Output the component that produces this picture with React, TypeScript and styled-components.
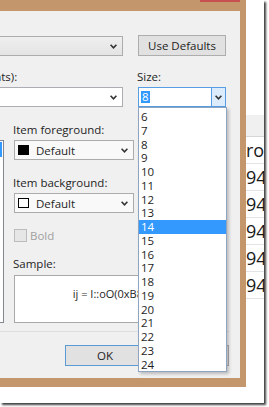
import React, { FC } from 'react';
import styled, { createGlobalStyle } from 'styled-components';

const FRAME = '#c3976b';
const UI_FONT = `'Open Sans', 'Noto Sans', sans-serif`;
// part of the dialog that lies left of the crop
const HIDDEN = 223;

const SIZES = Array.from({ length: 19 }, (_, i) => i + 6);
const DISPLAY_ITEMS = [
  'Plain Text',
  'Selected Text',
  'Inactive Selected Text',
  'Indicator Margin',
  'Line Numbers',
  'Visible White Space',
  'Bookmark',
  'Brace Matching (Highlight)',
  'Brace Matching (Rectangle)',
  'Breakpoint (Disabled)',
  'Breakpoint (Enabled)',
];
const TABLE_ROWS = ['rot', '94', '94', '94', '94', '94'];

const GlobalStyle = createGlobalStyle`
  * { box-sizing: border-box; }
  html, body { margin: 0; padding: 0; background: #fff; }
  body { width: 269px; height: 407px; overflow: hidden; font-family: ${UI_FONT}; }
`;

const Page = styled.div`
  width: 269px;
  height: 407px;
  background: #fff;
`;

const Shot = styled.div`
  display: flex;
  align-items: flex-start;
  width: 264px;
  height: 403px;
  overflow: hidden;
  background: #fff;
  box-shadow: 2px 2px 2px rgba(0, 0, 0, 0.75);
`;

const Window = styled.div`
  flex: none;
  display: flex;
  flex-direction: column;
  width: ${HIDDEN + 252}px;
  margin: -19px 0 0 -${HIDDEN + 6}px;
  padding: 0 6px 9px;
  background: ${FRAME};
`;

const TitleBar = styled.div`
  display: flex;
  justify-content: flex-end;
  height: 30px;
`;

const CloseButton = styled.div`
  width: 40px;
  height: 21px;
  background: #c75050;
`;

const Client = styled.div`
  display: flex;
  flex-direction: column;
  padding: 7px 14px 12px 10px;
  background: #f0f0f0;
  color: #1e1e1e;
  font-size: 11.5px;
`;

const Label = styled.div<{ $gap?: number }>`
  height: 15px;
  margin: ${({ $gap }) => $gap ?? 0}px 0 0 -1px;
  line-height: 15px;
  white-space: nowrap;
`;

const FieldRow = styled.div<{ $gap?: number }>`
  display: flex;
  align-items: flex-end;
  gap: 15px;
  margin-top: ${({ $gap }) => $gap ?? 0}px;
`;

const Field = styled.div<{ $width?: number }>`
  position: relative;
  display: flex;
  flex-direction: column;
  gap: 3px;
  ${({ $width }) => ($width ? `width: ${$width}px; flex: none;` : 'flex: 1;')}
`;

const Combo = styled.div<{ $tone?: 'flat' | 'field' | 'light'; $gap?: number }>`
  display: flex;
  align-items: center;
  flex: none;
  height: 20px;
  margin-top: ${({ $gap }) => $gap ?? 0}px;
  padding: 0 5px 0 3px;
  border: 1px solid ${({ $tone }) => ($tone === 'field' ? '#abadb3' : '#acacac')};
  background: ${({ $tone }) =>
    $tone === 'field' ? '#fff' : $tone === 'light' ? '#f9f9f9' : 'linear-gradient(#efefef, #e4e4e4)'};
  white-space: nowrap;
`;

const ComboValue = styled.div`
  flex: 1;
  display: flex;
  align-items: center;
  gap: 7px;
  overflow: hidden;
`;

const Swatch = styled.span<{ $fill: string }>`
  width: 11px;
  height: 10px;
  border: 1px solid #000;
  background: ${({ $fill }) => $fill};
`;

const SizeBox = styled.div`
  display: flex;
  flex: none;
  height: 20px;
  border: 1px solid #569de5;
  background: #fff;
`;

const SizeText = styled.div`
  flex: 1;
  display: flex;
  align-items: center;
  padding-left: 2px;

  & > span {
    padding: 0 1px;
    line-height: 12px;
    background: #3399ff;
    color: #fff;
  }
`;

const DropButton = styled.div`
  display: flex;
  align-items: center;
  justify-content: center;
  width: 14px;
  border-left: 1px solid #569de5;
  background: #dcecfc;
`;

const DropList = styled.div`
  position: absolute;
  top: 100%;
  left: 0;
  z-index: 2;
  display: flex;
  flex-direction: column;
  width: 89px;
  height: 265px;
  padding-top: 2px;
  border: 1px solid #8ea4c0;
  background: #fff;
  box-shadow: 2px 2px 3px rgba(0, 0, 0, 0.22);
  overflow: hidden;
`;

const DropItem = styled.div<{ $selected?: boolean }>`
  flex: none;
  height: 13.75px;
  padding-left: 2px;
  line-height: 13.75px;
  background: ${({ $selected }) => ($selected ? '#3399ff' : 'transparent')};
  color: ${({ $selected }) => ($selected ? '#fff' : '#1e1e1e')};
`;

const PushButton = styled.button<{ $default?: boolean; $width: number }>`
  flex: none;
  width: ${({ $width }) => $width}px;
  height: 21px;
  padding: 0;
  border: 1px solid ${({ $default }) => ($default ? '#5b9bd5' : '#adadad')};
  background: #e1e1e1;
  color: #1e1e1e;
  font-family: ${UI_FONT};
  font-size: 11.5px;
  line-height: 19px;
`;

const MainSection = styled.div`
  display: flex;
  align-items: stretch;
  margin-top: 15px;
`;

const ListColumn = styled.div`
  flex: 1;
  display: flex;
  flex-direction: column;
  gap: 3px;
  margin-right: 10px;
`;

const ListBox = styled.div`
  flex: 1 1 0;
  min-height: 0;
  padding: 1px;
  border: 1px solid #828790;
  background: #fff;
  overflow: hidden;
`;

const ListItem = styled.div<{ $selected?: boolean }>`
  height: 15px;
  padding-left: 3px;
  line-height: 15px;
  white-space: nowrap;
  background: ${({ $selected }) => ($selected ? '#3399ff' : 'transparent')};
  color: ${({ $selected }) => ($selected ? '#fff' : '#1e1e1e')};
`;

const MidColumn = styled.div`
  flex: none;
  display: flex;
  flex-direction: column;
  width: 120px;
`;

const RightColumn = styled.div`
  flex: none;
  display: flex;
  flex-direction: column;
  width: 88px;
  margin-left: 4px;
  padding-top: 18px;
  gap: 33px;
`;

const CheckRow = styled.div`
  display: flex;
  align-items: center;
  gap: 3px;
  height: 13px;
  margin-top: 16px;
  color: #a0a0a0;
`;

const CheckBox = styled.span`
  width: 13px;
  height: 13px;
  border: 1px solid #bcbcbc;
  background: #e6e6e6;
`;

const SampleBox = styled.div`
  display: flex;
  align-items: center;
  justify-content: center;
  flex: none;
  width: 203px;
  height: 48px;
  margin-top: 4px;
  padding-bottom: 11px;
  border: 1px solid #a9a9a9;
  background: #fff;
  font-size: 11px;
  white-space: nowrap;
`;

const Footer = styled.div`
  display: flex;
  justify-content: flex-end;
  gap: 4px;
  margin: 8px -3px 0 0;
  padding-top: 13px;
  border-top: 1px solid #dedede;
`;

const BackWindow = styled.div`
  flex: 1;
  display: flex;
  flex-direction: column;
  min-width: 0;
  padding-top: 115px;
  background: #fff;
`;

const TableHeader = styled.div`
  height: 22px;
  border-bottom: 1px solid #d6d6d6;
  background: #f0f0f0;
`;

const TableRow = styled.div`
  height: 27px;
  border-bottom: 1px solid #e4e4e4;
  color: #1a1a1a;
  font-size: 18px;
  line-height: 26px;
  white-space: nowrap;
`;

const Chevron: FC = () => (
  <svg width='7' height='5' viewBox='0 0 7 5'>
    <path d='M0.6 0.8 L3.5 3.8 L6.4 0.8' fill='none' stroke='#333' strokeWidth='1.6' />
  </svg>
);

const App: FC = () => (
  <Page>
    <GlobalStyle />
    <Shot>
      <Window>
        <TitleBar>
          <CloseButton />
        </TitleBar>

        <Client>
          <FieldRow>
            <Field>
              <Label>Show settings for:</Label>
              <Combo>
                <ComboValue>Text Editor</ComboValue>
                <Chevron />
              </Combo>
            </Field>
            <PushButton type='button' $width={88}>
              Use Defaults
            </PushButton>
          </FieldRow>

          <FieldRow $gap={13}>
            <Field>
              <Label>Font (bold type indicates fixed-width fonts):</Label>
              <Combo $tone='field'>
                <ComboValue>Consolas</ComboValue>
                <Chevron />
              </Combo>
            </Field>
            <Field $width={88}>
              <Label>Size:</Label>
              <SizeBox>
                <SizeText>
                  <span>8</span>
                </SizeText>
                <DropButton>
                  <Chevron />
                </DropButton>
              </SizeBox>
              <DropList>
                {SIZES.map((size) => (
                  <DropItem key={size} $selected={size === 14}>
                    {size}
                  </DropItem>
                ))}
              </DropList>
            </Field>
          </FieldRow>

          <MainSection>
            <ListColumn>
              <Label>Display items:</Label>
              <ListBox>
                {DISPLAY_ITEMS.map((item, i) => (
                  <ListItem key={item} $selected={i === 0}>
                    {item}
                  </ListItem>
                ))}
              </ListBox>
            </ListColumn>

            <MidColumn>
              <Label>Item foreground:</Label>
              <Combo $tone='light' $gap={3}>
                <ComboValue>
                  <Swatch $fill='#000' />
                  Default
                </ComboValue>
                <Chevron />
              </Combo>

              <Label $gap={15}>Item background:</Label>
              <Combo $tone='light' $gap={3}>
                <ComboValue>
                  <Swatch $fill='#fff' />
                  Default
                </ComboValue>
                <Chevron />
              </Combo>

              <CheckRow>
                <CheckBox />
                Bold
              </CheckRow>

              <Label $gap={14}>Sample:</Label>
              <SampleBox>ij = I::oO(0xB81l);</SampleBox>
            </MidColumn>

            <RightColumn>
              <PushButton type='button' $width={75}>
                Custom...
              </PushButton>
              <PushButton type='button' $width={75}>
                Custom...
              </PushButton>
            </RightColumn>
          </MainSection>

          <Footer>
            <PushButton type='button' $default $width={80}>
              OK
            </PushButton>
            <PushButton type='button' $width={80}>
              Cancel
            </PushButton>
          </Footer>
        </Client>
      </Window>

      <BackWindow>
        <TableHeader />
        {TABLE_ROWS.map((cell, i) => (
          <TableRow key={i}>{cell}</TableRow>
        ))}
      </BackWindow>
    </Shot>
  </Page>
);

export default App;
